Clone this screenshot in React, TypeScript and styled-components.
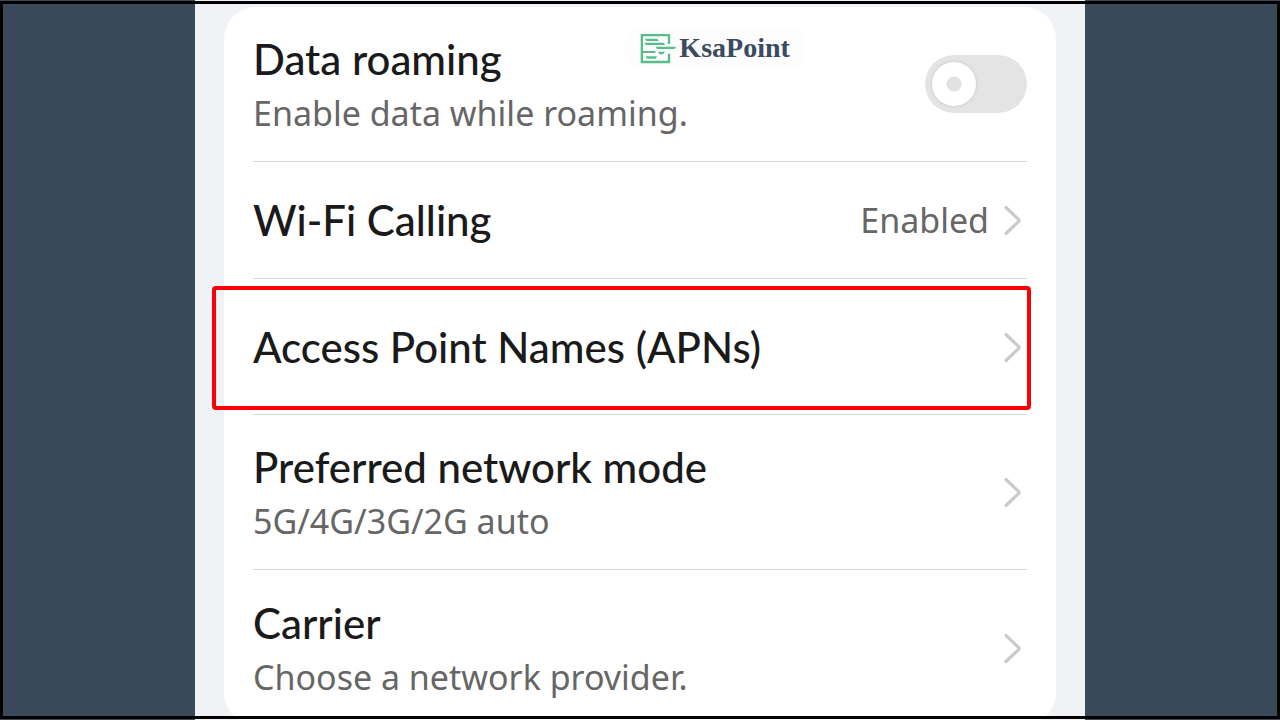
import React from 'react';
import styled, { createGlobalStyle } from 'styled-components';

const GlobalStyle = createGlobalStyle`
  *, *::before, *::after { box-sizing: border-box; }
  body {
    margin: 0;
    background: #394959;
    font-family: "Noto Sans", "Liberation Sans", sans-serif;
  }
`;

const Page = styled.div`
  height: 100vh;
  overflow: hidden;
`;

const Frame = styled.div`
  position: fixed;
  inset: 1px 0;
  border: 3px solid #000;
  pointer-events: none;
`;

const Phone = styled.main`
  max-width: 890px;
  min-height: 100vh;
  margin: 0 auto;
  padding: 7px 29px;
  background: #f0f2f6;
`;

const Card = styled.section`
  position: relative;
  padding: 0 29px;
  border-radius: 32px;
  background: #fff;
`;

const Brand = styled.a`
  position: absolute;
  top: 19px;
  left: 48%;
  display: flex;
  align-items: center;
  height: 44px;
  padding: 0 16px 0 14px;
  border-radius: 22px;
  background: #fdfdfd;
  color: #3a4a61;
  font: bold 28px/44px "Liberation Serif", serif;
  text-decoration: none;
`;

const List = styled.ul`
  margin: 0;
  padding: 0;
  list-style: none;
`;

const Item = styled.li<{ $height: number }>`
  position: relative;
  display: flex;
  min-height: ${(p) => p.$height}px;
  border-bottom: 1px solid #d6d6d6;
  &:last-child { border-bottom: 0; }
`;

const rowLayout = `
  flex: 1;
  display: flex;
  align-items: center;
  justify-content: space-between;
  gap: 14px;
  padding: 0;
`;

const RowLabel = styled.label`
  ${rowLayout}
`;

const RowButton = styled.button`
  ${rowLayout}
  border: 0;
  background: none;
  font-family: inherit;
  text-align: left;
  cursor: pointer;
`;

const Texts = styled.span<{ $twoLine: boolean }>`
  flex: 1;
  display: flex;
  flex-direction: column;
  padding-top: ${(p) => (p.$twoLine ? 4 : 0)}px;
`;

const Title = styled.span`
  color: #1a1a1a;
  font: 500 42px/54px Lato, "Liberation Sans", sans-serif;
`;

const Detail = styled.span`
  color: #666;
  font-size: 34px;
  line-height: 54px;
`;

const Switch = styled.input`
  appearance: none;
  display: flex;
  align-items: center;
  width: 102px;
  height: 58px;
  margin: 0;
  padding: 0 7px;
  border-radius: 29px;
  background: #e4e4e4;
  cursor: pointer;
  &::before {
    content: "";
    width: 44px;
    height: 44px;
    border-radius: 50%;
    background: radial-gradient(circle, #e2e2e2 7px, #fff 8px);
    box-shadow: 0 0 3px 1px #d2d2d2;
  }
  &:checked { justify-content: flex-end; background: #3a7bf7; }
`;

const ChevronSvg = styled.svg`
  flex: none;
  width: 24px;
  height: 34px;
`;

const Highlight = styled.span`
  position: absolute;
  inset: 7px -4px 4px -41px;
  border: 4px solid #fb0007;
  border-radius: 4px;
  pointer-events: none;
`;

function Chevron() {
  return (
    <ChevronSvg viewBox="0 0 24 34" fill="none" aria-hidden="true">
      <path d="M3 4.500 15.800 16.700Q16.600 17.500 15.800 18.300L3 30.500" stroke="#cacaca" strokeWidth="3.2" strokeLinecap="round" strokeLinejoin="round" />
    </ChevronSvg>
  );
}

function BrandMark() {
  return (
    <svg width="42" height="36" viewBox="0 0 126 108" aria-hidden="true">
      <g fill="none" stroke="#56bd8b" strokeWidth="7">
        <path d="M96 42V15.500H14.500V96H96V71" />
        <path d="M14 66H55" strokeWidth="6" />
      </g>
      <g fill="#56bd8b">
        <path d="M24 26H60L66 33H28Z" />
        <path d="M22 38H80L85 45H26Z" />
        <path d="M56 50H117L113 57H60Z" />
        <path d="M62 65H84L78 73H68Z" />
        <path d="M26 79H60L56 86H30Z" />
      </g>
    </svg>
  );
}

type Setting = {
  title: string;
  detail?: string;
  value?: string;
  height: number;
  toggle?: boolean;
  highlighted?: boolean;
};

const settings: Setting[] = [
  { title: 'Data roaming', detail: 'Enable data while roaming.', height: 155, toggle: true },
  { title: 'Wi-Fi Calling', value: 'Enabled', height: 117 },
  { title: 'Access Point Names (APNs)', height: 136, highlighted: true },
  { title: 'Preferred network mode', detail: '5G/4G/3G/2G auto', height: 155 },
  { title: 'Carrier', detail: 'Choose a network provider.', height: 155 },
];

function SettingRow({ title, detail, value, height, toggle, highlighted }: Setting) {
  const texts = (
    <Texts $twoLine={Boolean(detail)}>
      <Title>{title}</Title>
      {detail && <Detail>{detail}</Detail>}
    </Texts>
  );
  return (
    <Item $height={height}>
      {toggle ? (
        <RowLabel>
          {texts}
          <Switch type="checkbox" role="switch" />
        </RowLabel>
      ) : (
        <RowButton type="button">
          {texts}
          {value && <Detail>{value}</Detail>}
          <Chevron />
        </RowButton>
      )}
      {highlighted && <Highlight />}
    </Item>
  );
}

export default function App() {
  return (
    <Page>
      <GlobalStyle />
      <Phone>
        <Card>
          <List>
            {settings.map((s) => (
              <SettingRow key={s.title} {...s} />
            ))}
          </List>
          <Brand href="#">
            <BrandMark />
            KsaPoint
          </Brand>
        </Card>
      </Phone>
      <Frame />
    </Page>
  );
}
